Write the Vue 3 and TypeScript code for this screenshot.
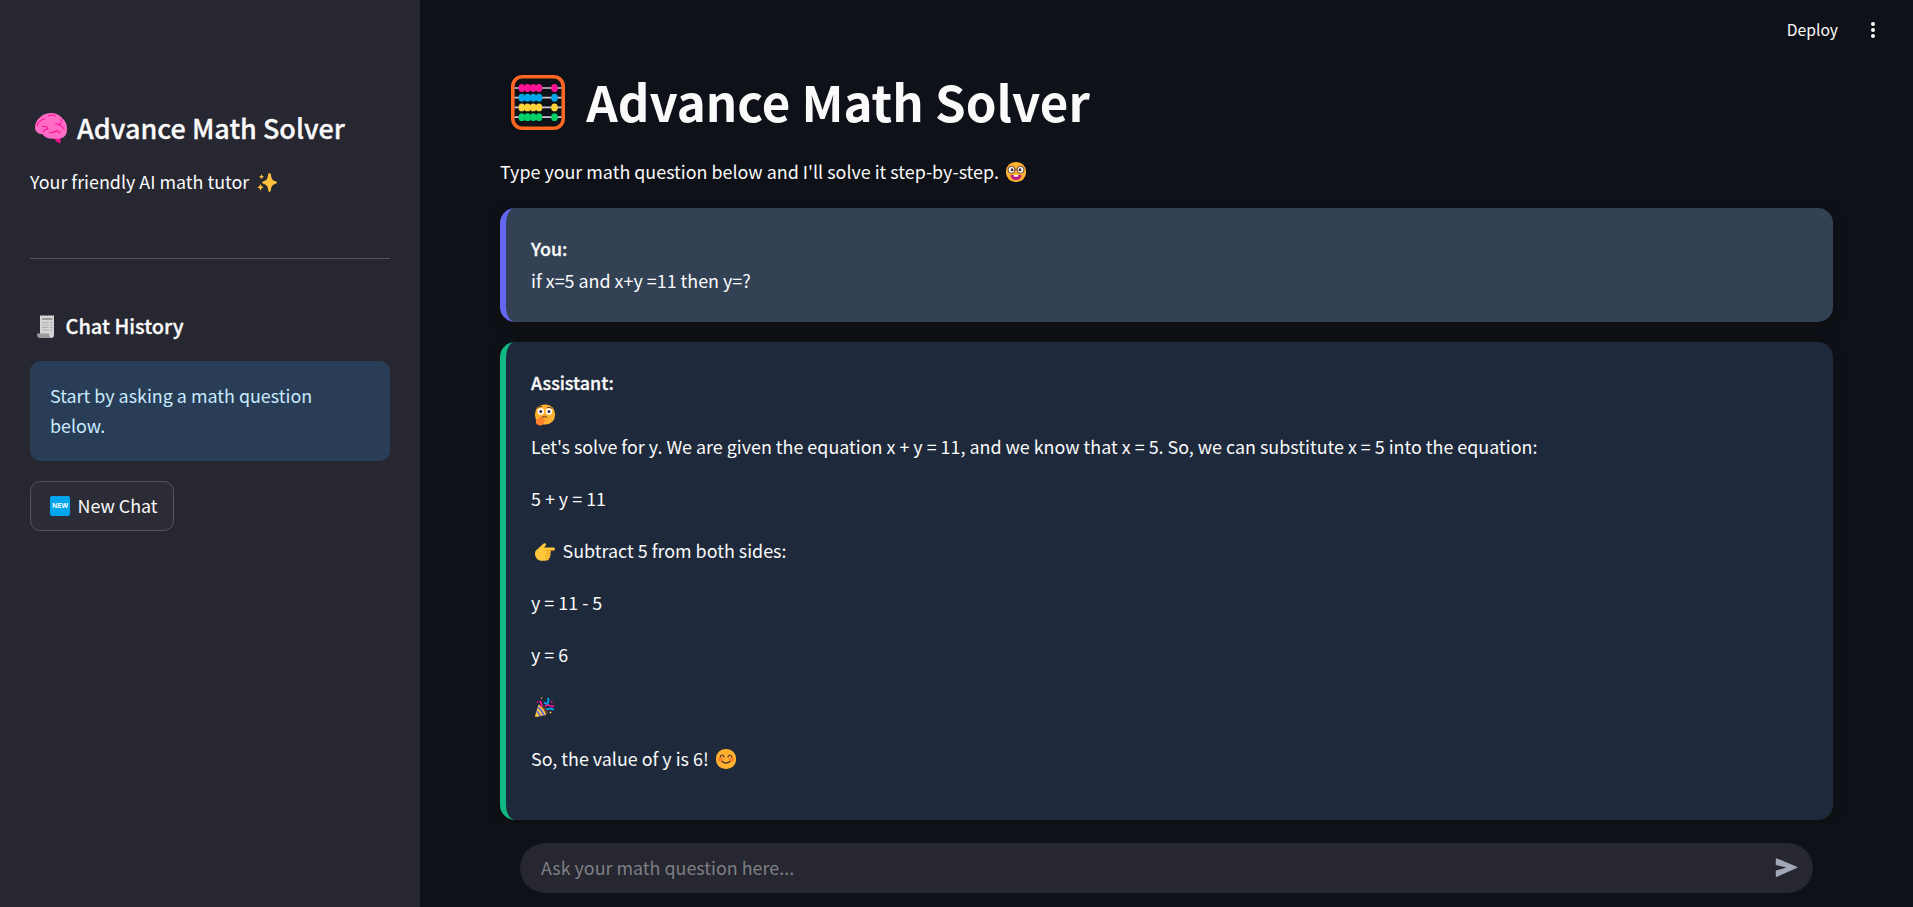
<script setup lang="ts">
import { ref } from 'vue'

interface BeadRow {
  y: number
  color: string
}

const question = ref('')
const beadRows: BeadRow[] = [
  { y: 13, color: '#ff1095' },
  { y: 22.7, color: '#00a6ed' },
  { y: 32.4, color: '#ffd43b' },
  { y: 42.2, color: '#00d268' },
]
const beads: number[] = [10.8, 16.5, 22.2, 28, 43.5]
</script>

<template>
  <div class="app">
    <aside class="sidebar">
      <h2>
        <svg class="brain" viewBox="0 0 32 31">
          <path d="M19 25h6.5v5.5q-4.500-1.500-6.500-5.500z" fill="#ff1095" />
          <path d="M0 14.500C0 10 2 6.500 5.500 4 8.500 1 12 0 16 0c5 0 9 2 11.500 5.500C30.500 8 32 11.500 32 16c0 4-1 6.500-3.500 8.300C25 26.300 19 26 14.500 25.500 11.500 25 9 23.500 7.500 21.200 3 21 0 18.500 0 14.500z" fill="#ff6cc5" />
          <path d="M2 12.500C3 8.500 6 7 9.500 5.800M13.500 3q3-2 7 0M7.500 13.500q4-1 5.500 2.500-4 0-4.500 3M26 6.500q1 4-2.500 5.500M20.500 10.500q6 1 8.500 5.500M14.500 19.500q3.500 1 7.500-2l3 2.500" fill="none" stroke="#ff1095" stroke-width="1.100" stroke-linecap="round" stroke-linejoin="round" />
        </svg>Advance Math Solver
      </h2>
      <p class="tagline">Your friendly AI math tutor<svg class="sparkles" viewBox="0 0 20 19">
        <path d="M12.500 0Q13.700 0 14 2C14.500 6 15.500 7.500 18 8q2 .5 2 1.500t-2 1.400c-2.500.6-3.500 2.100-4 5.100-.3 2-.8 3-1.500 3s-1.200-1-1.500-3c-.5-3-1.500-4.500-4-5.100Q5 10.500 5 9.500T7 8c2.500-.5 3.500-2 4-6 .3-1.300.8-2 1.500-2zM3.500 10.500C4 13 4.500 13.500 7 14.300 4.500 15 4 15.500 3.500 18 3 15.500 2.500 15 0 14.300 2.500 13.500 3 13 3.500 10.500zM4.500 1C4.900 2.700 5.300 3.200 7 3.700 5.300 4.200 4.900 4.700 4.500 6.500 4.100 4.700 3.700 4.200 2 3.700 3.700 3.200 4.100 2.700 4.500 1z" fill="#ffc23d" />
      </svg></p>
      <hr />
      <h3>
        <svg class="receipt" viewBox="0 0 18 23">
          <path d="M3 1l1-1 1.200 1 1.300-1 1.300 1L9 0l1.400 1 1.200-1 1.300 1L14.200 0l1.200 1 1.600-1v20c0 2-1 3-3 3L3 19z" fill="#d5d5d5" />
          <path d="M5 4h10.500" stroke="#8a8a8a" stroke-width="1.600" />
          <path d="M5 7.500h6.500M13 7.500h2.500M5 10h6.500M13 10h2.500M5 12.500h6.500M13 12.500h2.500M5 15h6.500M13 15h2.500" stroke="#a9a9a9" stroke-width=".9" />
          <path d="M.3 18.500h11.200q.5 0 .6.700.4 3.800 2.400 3.800H3.200Q0 23 0 19z" fill="#9b9b9b" />
        </svg>Chat History
      </h3>
      <div class="info">Start by asking a math question below.</div>
      <button class="new-chat" type="button">
        <svg class="new-icon" viewBox="0 0 20 20">
          <rect width="20" height="20" rx="2" fill="#00a6ed" />
          <text x="10" y="12.300" text-anchor="middle" textLength="16" lengthAdjust="spacingAndGlyphs">NEW</text>
        </svg><span>New Chat</span>
      </button>
    </aside>

    <main class="main">
      <header class="toolbar">
        <span>Deploy</span>
        <svg class="dots" viewBox="0 0 6 20" fill="#fafafa">
          <circle cx="3" cy="4" r="2" />
          <circle cx="3" cy="10" r="2" />
          <circle cx="3" cy="16" r="2" />
        </svg>
      </header>

      <h1>
        <svg class="abacus" viewBox="0 0 54 55">
          <rect x="1.800" y="1.800" width="50.400" height="51.400" rx="9.500" fill="none" stroke="#ff6723" stroke-width="3.600" />
          <template v-for="row in beadRows" :key="row.y">
            <path :d="`M3.500 ${row.y}H50.500`" stroke="#cdc4d6" stroke-width="1.700" />
            <ellipse v-for="x in beads" :key="x" :cx="x" :cy="row.y" rx="3.300" ry="3.900" :fill="row.color" />
          </template>
        </svg>Advance Math Solver
      </h1>
      <p class="intro">Type your math question below and I'll solve it step-by-step.<svg class="face nerd" viewBox="0 0 20 20">
        <rect width="20" height="20" rx="9.300" fill="#ffb02e" />
        <circle cx="5.500" cy="7.800" r="3.500" fill="#fff" stroke="#60452f" stroke-width="1" />
        <circle cx="14.500" cy="7.800" r="3.500" fill="#fff" stroke="#60452f" stroke-width="1" />
        <path d="M8.900 7.500q1.100-1 2.200 0" fill="none" stroke="#60452f" />
        <circle cx="6" cy="7.800" r="1.500" fill="#402a32" />
        <circle cx="14" cy="7.800" r="1.500" fill="#402a32" />
        <path d="M4.700 13H15.300C15.200 16.500 13 18 10 18s-5.200-1.500-5.300-5z" fill="#bb1d80" />
        <path d="M7.800 13h4.400v1.700H7.800z" fill="#fff" />
      </svg></p>

      <section class="message user">
        <strong>You:</strong>
        <div>if x=5 and x+y =11 then y=?</div>
      </section>

      <section class="message assistant">
        <strong>Assistant:</strong>
        <div class="lead-line">
          <svg class="face lead" viewBox="0 0 20 20">
            <rect y="-.5" width="20" height="20" rx="9.300" fill="#ffb02e" />
            <circle cx="5.800" cy="6.500" r="3.200" fill="#fff" />
            <circle cx="14" cy="6.500" r="3.200" fill="#fff" />
            <circle cx="5.800" cy="6.500" r="1.500" fill="#402a32" />
            <circle cx="14" cy="6.500" r="1.500" fill="#402a32" />
            <path d="M3.500 2.300q1.500-1.200 3.200-.8M12.500 2.500q2.500-.5 4.300.6M7 12.300q2.500-2.500 5 0" fill="none" stroke="#402a32" stroke-width=".9" stroke-linecap="round" />
            <path d="M4.500 13c.3-1.600.3-2.500 1-2.400 1 .2.800 1.500.7 2.900l3.200-1.200c1-.3 1.300.7.500 1.200l-.8.600c.9.400.8 1.200.2 1.500.7.500.5 1.300-.2 1.600 0 1.800-1.600 3.200-4 3.200C2.500 20.500.8 19 .8 16.800c0-2 1.400-3.500 3.700-3.800z" fill="#ff822d" />
          </svg>
        </div>
        <p>Let's solve for y. We are given the equation x + y = 11, and we know that x = 5. So, we can substitute x = 5 into the equation:</p>
        <p>5 + y = 11</p>
        <p>
          <svg class="point lead" viewBox="0 0 20 18">
            <path d="M0 10.500C0 8.500 1 7 3 5.800L8 1c1-1 2-1 2.600-.5.800.8.300 1.800-.3 2.500L9 4.600h9.700c1.700 0 1.700 3 0 3H15c1.300.3 1.200 2.300.1 2.600 1 .5.800 2.300-.3 2.600.7.800.4 2-.5 2.300C14.200 17 12.500 17.800 10 17.800H7C3 17.800 0 15 0 10.500z" fill="#ffc83d" />
            <path d="M10 7.600h8.500M11 10.200h4M11 12.800h3.700M11 15.300h3" stroke="#d67d00" stroke-width=".6" stroke-linecap="round" />
          </svg>Subtract 5 from both sides:
        </p>
        <p>y = 11 - 5</p>
        <p>y = 6</p>
        <p>
          <svg class="face lead" viewBox="0 0 20 20">
            <path d="M3.800 7q4 1 6.500 4 2.700 2.800 2.500 6L8 18z" fill="#6d4534" />
            <path d="M3.500 7.500Q9 11 11 18L1 20Q0 20 0 19z" fill="#ffc83d" />
            <path d="M2.800 10.300Q7 13 9 18.500M1.500 14Q4 16 5.500 19.200" stroke="#5b5fe0" stroke-width="1.600" fill="none" />
            <path d="M6.200 10Q7.500 6.500 4.500 4M10 9.500q2.500-2.500 4.500-1 1.500 1.500 4.500.2" stroke="#ff1095" stroke-width="1.700" fill="none" />
            <path d="M9 5.500l3 1.500Q14.500 4 13 1M11.500 12.500q3.500-2 7.500.3" stroke="#00a6ed" stroke-width="1.700" fill="none" />
            <path d="M16 4h1.500v1.500H16zM2 4.200h1.400v1.400H2z" fill="#ff1095" />
            <circle cx="6.600" cy="1" r=".8" fill="#ffc83d" />
            <circle cx="15.500" cy="15.500" r=".9" fill="#ffc83d" />
          </svg>
        </p>
        <p>So, the value of y is 6!<svg class="face smile" viewBox="0 0 20 20">
          <rect width="20" height="20" rx="9.300" fill="#ffb02e" />
          <circle cx="4.500" cy="10.500" r="2.400" fill="#ff822d" />
          <circle cx="15.500" cy="10.500" r="2.400" fill="#ff822d" />
          <path d="M4.200 8q.3-2 1.900-2T8 8M12 8q.3-2 1.900-2t1.900 2M6.200 12.500q3.800 3.200 7.600 0" fill="none" stroke="#402a32" stroke-width="1.200" stroke-linecap="round" />
        </svg></p>
      </section>

      <div class="bottom">
        <form class="composer" @submit.prevent>
          <input v-model="question" type="text" placeholder="Ask your math question here..." />
          <svg class="send" viewBox="0 0 23 20">
            <path d="M.8 1.300Q.8 0 2 .4L21.800 8.800q1.300.7 0 1.300L2 18.800q-1.200.4-1.200-.9V12.500L11.500 9.500.8 7z" fill="#a3a8b8" />
          </svg>
        </form>
      </div>
    </main>
  </div>
</template>

<style>
body {
  margin: 0;
  background: #0e1117;
}
</style>

<style scoped>
.app {
  display: flex;
  height: 907px;
  overflow: hidden;
  background: #0e1117;
  color: #fafafa;
  font: 17.9px/30px "Noto Sans CJK SC", "Noto Sans CJK JP", "Open Sans", sans-serif;
}
h1, h2, h3, p {
  margin: 0;
}
h2, h3, strong {
  -webkit-text-stroke: 0.3px currentColor;
}
svg {
  overflow: visible;
}

/* Sidebar */
.sidebar {
  box-sizing: border-box;
  flex: none;
  width: 420px;
  padding: 110px 30px 0;
  background: #262730;
}
h2 {
  height: 36px;
  font-size: 27px;
  font-weight: 500;
  line-height: 36px;
}
.brain {
  width: 32px;
  height: 31px;
  margin: 0 10px 0 5px;
  vertical-align: -4.500px;
}
.tagline {
  height: 30px;
  margin-top: 20px;
}
.sparkles {
  width: 20px;
  height: 19px;
  margin-left: 8px;
  vertical-align: -2.500px;
}
hr {
  height: 1px;
  margin: 62px 0 52px;
  border: 0;
  background: #51525a;
}
h3 {
  height: 30px;
  font-size: 20px;
  font-weight: 500;
}
.receipt {
  width: 18px;
  height: 23px;
  margin: 0 10.500px 0 7px;
  vertical-align: -4px;
}
.info {
  box-sizing: border-box;
  height: 100px;
  margin-top: 20px;
  padding: 19px 20px;
  border-radius: 10px;
  background: #2a3d56;
  color: #c7ebff;
}
.new-chat {
  display: flex;
  align-items: center;
  box-sizing: border-box;
  width: 144px;
  height: 50px;
  margin-top: 20px;
  padding: 0 0 0 19px;
  border: 1px solid #53545c;
  border-radius: 10px;
  background: #2b2c36;
  color: inherit;
  font: inherit;
}
.new-chat span {
  padding-bottom: 2px;
}
.new-icon {
  flex: none;
  width: 20px;
  height: 20px;
  margin-right: 7.500px;
}
.new-icon text {
  fill: #fff;
  font: 700 6.500px "Open Sans", sans-serif;
}

/* Main column */
.main {
  flex: 1;
  padding: 0 80px;
}
.toolbar {
  display: flex;
  align-items: center;
  justify-content: flex-end;
  gap: 31.500px;
  height: 60px;
  margin-right: -42.500px;
  font-size: 15.670px;
}
.dots {
  width: 6px;
  height: 20px;
}
h1 {
  height: 66px;
  margin-top: 7.500px;
  font-size: 49.200px;
  font-weight: 700;
  line-height: 66px;
  white-space: nowrap;
}
.abacus {
  width: 54px;
  height: 55px;
  margin: 0 21.800px 0 10.500px;
  vertical-align: -8px;
}
.intro {
  height: 30px;
  margin: 22px 0 22.500px;
}
.face {
  width: 20px;
  height: 20px;
  vertical-align: -3px;
}
.nerd,
.smile {
  margin-left: 7.500px;
}
.point {
  width: 20px;
  height: 18px;
  vertical-align: -3px;
}
.lead {
  margin: 0 7.500px 0 4px;
}
.message {
  box-sizing: border-box;
  padding: 24px 25px;
  border-left: 6px solid;
  border-radius: 15px;
  box-shadow: 0 4px 12px rgba(16, 16, 16, 0.75);
  line-height: 32px;
}
.message strong {
  display: block;
  font-weight: 500;
}
.message p {
  height: 32px;
  margin-bottom: 20px;
}
.lead-line {
  height: 32px;
}
.user {
  height: 114px;
  border-color: #6366f1;
  background: #334155;
}
.assistant {
  height: 478px;
  margin-top: 20px;
  border-color: #10b981;
  background: #1e293b;
}

/* Question input */
.bottom {
  position: relative;
  height: 64px;
  margin: 3px -20px 0;
  padding: 20px 40px 0;
  background: #0e1117;
}
.composer {
  display: flex;
  align-items: center;
  box-sizing: border-box;
  height: 50px;
  padding: 0 15px 0 21px;
  border-radius: 25px;
  background: #262730;
}
.composer input {
  flex: 1;
  height: 30px;
  margin-bottom: 3px;
  padding: 0;
  border: 0;
  outline: 0;
  background: transparent;
  color: #fafafa;
  font: inherit;
}
.composer input::placeholder {
  color: #7e7f84;
  opacity: 1;
}
.send {
  width: 23px;
  height: 20px;
}
</style>
